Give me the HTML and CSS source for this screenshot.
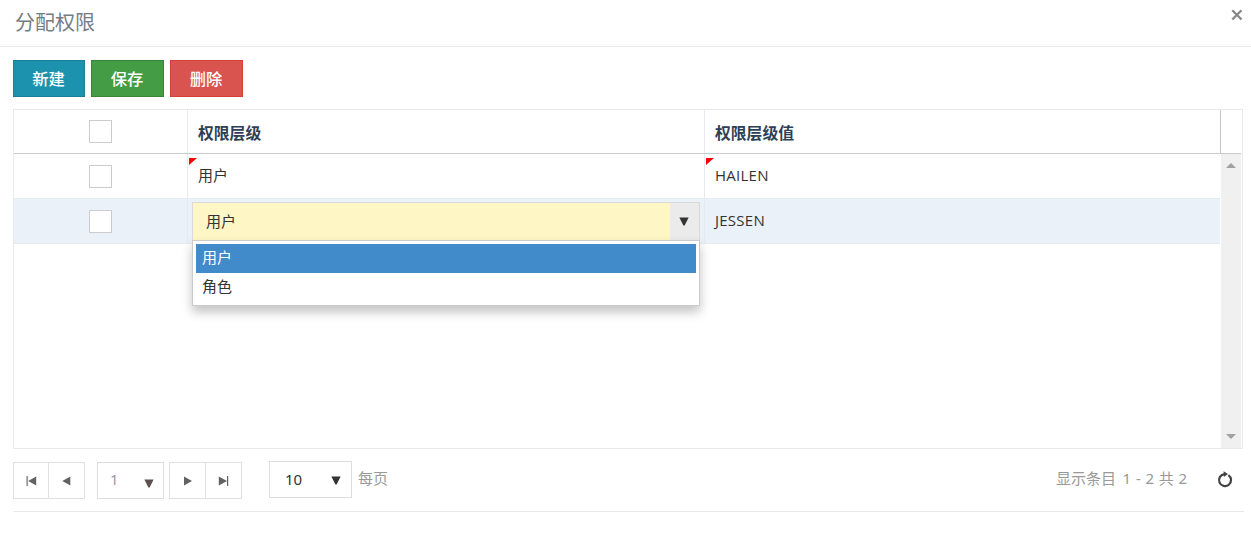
FILE: index.html
```html
<!DOCTYPE html>
<html lang="zh-CN">
<head>
<meta charset="utf-8">
<title>分配权限</title>
<link rel="stylesheet" href="styles.css">
</head>
<body>
<header class="dialog-header">
  <h1 class="dialog-title">分配权限</h1>
  <svg class="close" width="12" height="12" viewBox="0 0 12 12"><path d="M1.3 1.3 10.5 10.5M10.5 1.3 1.3 10.5"/></svg>
</header>
<main class="content">
  <div class="toolbar">
    <button class="btn btn-new">新建</button>
    <button class="btn btn-save">保存</button>
    <button class="btn btn-delete">删除</button>
  </div>
  <section class="grid">
    <div class="grid-head">
      <div class="cell check-cell"><span class="check"></span></div>
      <div class="cell level-cell"><span class="txt">权限层级</span></div>
      <div class="cell value-cell"><span class="txt">权限层级值</span></div>
    </div>
    <div class="grid-body">
      <div class="rows">
        <div class="row">
          <div class="cell check-cell"><span class="check"></span></div>
          <div class="cell level-cell dirty"><span class="txt">用户</span></div>
          <div class="cell value-cell dirty"><span class="txt latin">HAILEN</span></div>
        </div>
        <div class="row selected">
          <div class="cell check-cell"><span class="check"></span></div>
          <div class="cell level-cell editing">
            <div class="combo">
              <span class="combo-value"><span class="txt">用户</span></span>
              <span class="combo-arrow"><svg width="10" height="9" viewBox="0 0 10 9"><path d="M.4.5h9.2L5.6 8.6H4.4z"/></svg></span>
            </div>
            <ul class="menu">
              <li class="option active"><span class="txt">用户</span></li>
              <li class="option"><span class="txt">角色</span></li>
            </ul>
          </div>
          <div class="cell value-cell"><span class="txt latin">JESSEN</span></div>
        </div>
      </div>
      <div class="scrollbar">
        <svg width="10" height="5" viewBox="0 0 10 5"><path d="M0 5 5 0l5 5z"/></svg>
        <svg width="10" height="5" viewBox="0 0 10 5"><path d="M0 0h10L5 5z"/></svg>
      </div>
    </div>
  </section>
  <footer class="pager">
    <div class="nav">
      <span class="nav-btn nav-start"><svg width="11" height="10" viewBox="0 0 11 10"><path class="bar" d="M.3 0h1.8v10H.3z"/><path d="M10.2.5v9L2.2 5z"/></svg></span>
      <span class="nav-btn"><svg width="11" height="10" viewBox="0 0 11 10"><path d="M9.3.5v9L1.3 5z"/></svg></span>
    </div>
    <div class="select page"><span class="txt">1</span><svg width="10" height="9" viewBox="0 0 10 9"><path d="M.4.5h9.2L5.6 8.6H4.4z"/></svg></div>
    <div class="nav">
      <span class="nav-btn"><svg width="11" height="10" viewBox="0 0 11 10"><path d="M2 .5v9L10 5z"/></svg></span>
      <span class="nav-btn"><svg width="11" height="10" viewBox="0 0 11 10"><path d="M9 0h1.2v10H9zM.8.5v9L9 5z"/></svg></span>
    </div>
    <div class="select size"><span class="txt">10</span><svg width="10" height="9" viewBox="0 0 10 9"><path d="M.4.5h9.2L5.6 8.6H4.4z"/></svg></div>
    <span class="per-page">每页</span>
    <span class="summary"><span class="summary-label">显示条目</span> 1 - 2 共 2</span>
    <svg class="refresh" width="16" height="17" viewBox="0 0 16 17"><path class="ring" d="M7.6 3.1A6 6 0 1 0 11.4 4.1"/><path class="tip" d="M6.6.3 11 3.1 6.9 5.9z"/></svg>
  </footer>
</main>
</body>
</html>
```
FILE: styles.css
```css
* { box-sizing: border-box; }
body {
  margin: 0;
  height: 548px;
  overflow: hidden;
  background: #fff;
  color: #333;
  font: 15px/20px "Noto Sans", "Noto Sans CJK SC", sans-serif;
}
svg { display: block; flex: none; }
.dialog-header {
  height: 47px;
  border-bottom: 1px solid #e9ebec;
  display: flex;
  justify-content: space-between;
  padding: 0 9px 0 15px;
}
.dialog-title {
  margin: 9px 0 0;
  font-size: 20px;
  line-height: 28px;
  font-weight: 400;
  color: #747c83;
}
.close { margin: 9px -1px 0 0; fill: none; stroke: #888; stroke-width: 2.3; }
.content { padding: 13px 8px 0 13px; }
.toolbar { display: flex; gap: 6px; height: 37px; }
.btn {
  width: 73px;
  padding: 0 1px 2px 0;
  border: 1px solid;
  color: #fff;
  font: 500 16.3px/20px "Noto Sans CJK SC", sans-serif;
}
.btn-new { width: 72px; background: #1d92af; border-color: #19809a; }
.btn-save { background: #449d44; border-color: #398439; }
.btn-delete { background: #d9534f; border-color: #d43f3a; }
.grid {
  width: 1230px;
  height: 340px;
  margin-top: 12px;
  border: 1px solid #e6eaee;
}
.grid-head {
  display: flex;
  width: 1227px;
  height: 44px;
  border-bottom: 1px solid #c8cacc;
  color: #2e3f55;
  font-size: 15.8px;
  font-weight: 700;
}
.grid-head .value-cell { border-right: 1px solid #c5c7c9; }
.grid-head .txt { margin-top: 3px; }
.grid-body { display: flex; height: 294px; width: 1227px; }
.rows { width: 1206px; margin-right: 1px; }
.row { display: flex; height: 45px; border-bottom: 1px solid #e6ebef; }
.row.selected { background: #eaf1f8; }
.row .cell > .txt { margin-bottom: 2px; }
.cell { display: flex; align-items: center; border-right: 1px solid #e6eaee; padding-left: 10px; }
.check-cell { width: 174px; justify-content: center; padding: 0; }
.level-cell { width: 517px; }
.value-cell { width: 516px; }
.row .value-cell { border: 0; width: 515px; }
.check { width: 23px; height: 23px; background: #fff; border: 1px solid #ccc; }
.row .check { margin-top: 1px; }
.dirty, .editing { position: relative; }
.dirty::before {
  content: "";
  position: absolute;
  left: 1px;
  top: 4px;
  width: 8px;
  height: 7px;
  background: #f00;
  clip-path: polygon(0 0, 100% 0, 0 100%);
}
.latin { font-family: "Open Sans", sans-serif; font-size: 15px; letter-spacing: .25px; }
.editing { padding: 3px 4px 2px 4px; align-items: flex-start; }
.combo {
  width: 508px;
  height: 39px;
  border: 1px solid #dadada;
  background: #fff6c5;
  display: flex;
  flex: none;
}
.combo-value { flex: 1; padding: 8px 0 0 13px; }
.combo-arrow { width: 29px; background: #ebebeb; padding: 14px 0 0 9px; }
.menu {
  position: absolute;
  left: 4px;
  top: 41px;
  width: 508px;
  height: 66px;
  margin: 0;
  padding: 3px;
  list-style: none;
  background: #fff;
  border: 1px solid #ccc;
  box-shadow: 0 6px 10px rgba(0, 0, 0, .24);
  z-index: 2;
}
.option { height: 29px; padding: 3px 6px; }
.option.active { background: #428bca; color: #fff; }
.scrollbar {
  width: 20px;
  background: #f0f0f0;
  display: flex;
  flex-direction: column;
  justify-content: space-between;
  align-items: center;
  padding: 9px 0;
}
.scrollbar svg { fill: #a0a0a0; }
.pager {
  width: 1231px;
  height: 63px;
  border-bottom: 1px solid #e6e9ec;
  padding-top: 12px;
  display: flex;
  align-items: flex-start;
  color: #999;
}
.nav { display: flex; width: 73px; height: 37px; margin-top: 1px; border: 1px solid #e0e0e0; }
.nav:first-child { width: 72px; }
.nav-btn { flex: 1; display: flex; align-items: center; justify-content: center; }
.nav-btn + .nav-btn { border-left: 1px solid #e0e0e0; }
.nav-btn svg { fill: #626262; }
.nav-btn .bar { fill: #999; }
.nav-start { flex: none; width: 34px; }
.select {
  height: 37px;
  border: 1px solid #ddd;
  display: flex;
  justify-content: space-between;
}
.select .txt { margin-top: 7px; }
.select svg { margin-top: 14px; }
.page { width: 67px; margin: 1px 5px 0 12px; padding: 0 9px 0 12px; }
.page .txt { margin-top: 6px; }
.page svg { margin-top: 16px; fill: #5d504c; }
.size { width: 83px; margin-left: 27px; padding: 0 10px 0 15px; color: #333; }
.per-page { margin: 7px 0 0 6px; }
.summary { margin: 7px 30px 0 auto; word-spacing: .8px; }
.summary-label { margin-right: 2px; }
.refresh { margin: 10px 11px 0 0; }
.ring { fill: none; stroke: #424242; stroke-width: 2.2; }
.tip { fill: #424242; }
.combo-arrow svg, .size svg { fill: #333; }
```
